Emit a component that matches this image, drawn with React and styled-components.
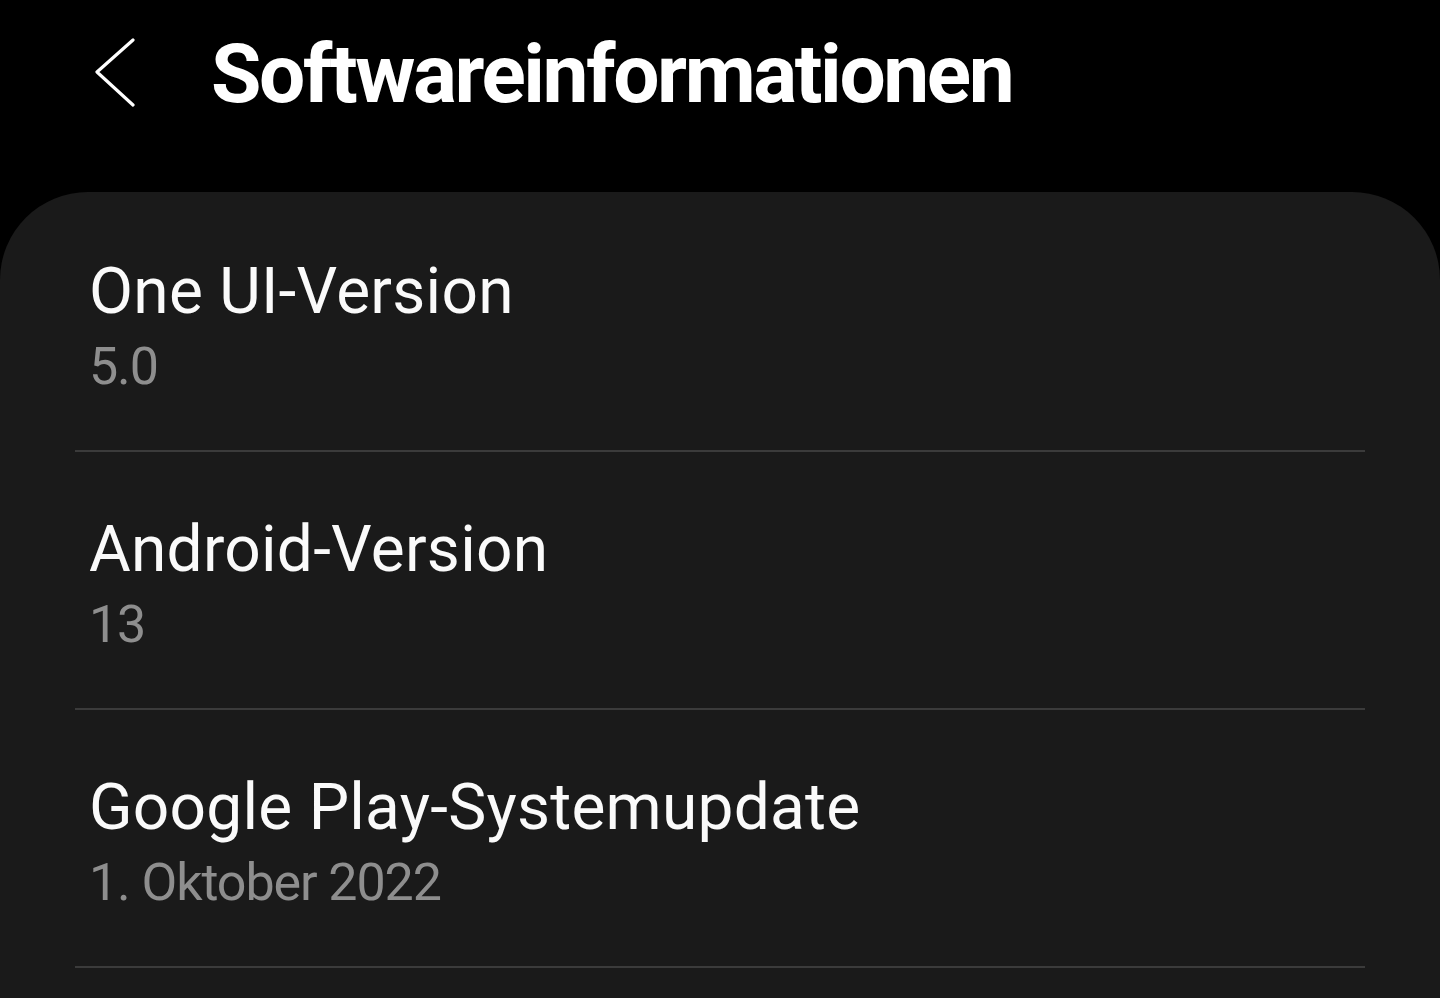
import React from "react";
import styled, { createGlobalStyle } from "styled-components";

const Global = createGlobalStyle`
  html, body { margin: 0; padding: 0; background: #000; }
  body { font-family: Roboto, "Noto Sans", sans-serif; -webkit-font-smoothing: antialiased; }
`;

const Screen = styled.div`
  width: 1440px;
  height: 998px;
  background: #000;
  overflow: hidden;
  display: flex;
  flex-direction: column;
`;

const Header = styled.header`
  height: 192px;
  display: flex;
  align-items: flex-start;
  padding: 0 0 0 92px;
  box-sizing: border-box;
`;

const BackButton = styled.button`
  background: none;
  border: none;
  padding: 0;
  margin-top: 38px;
  width: 46px;
  height: 70px;
  display: flex;
  cursor: pointer;
`;

const Title = styled.h1`
  margin: 0 0 0 73px;
  padding-top: 26px;
  font-family: Roboto, sans-serif;
  font-weight: 700;
  font-size: 82px;
  line-height: 96px;
  color: #fff;
  letter-spacing: -2.4px;
`;

const Card = styled.section`
  flex: 1;
  background: #1a1a1a;
  border-radius: 88px 88px 0 0;
  padding-top: 2px;
`;

const Row = styled.div`
  margin: 0 75px;
  padding: 60px 0 53px 14px;
  border-bottom: 2px solid #3b3b3b;
  display: flex;
  flex-direction: column;
  gap: 7px;
`;

const RowTitle = styled.div`
  font-size: 64px;
  line-height: 76px;
  color: #fafafa;
  letter-spacing: 0.25px;
`;

const RowValue = styled.div`
  font-size: 52px;
  line-height: 60px;
  color: #8e8e8e;
  letter-spacing: -1.1px;
`;

const items = [
  { title: "One UI-Version", value: "5.0" },
  { title: "Android-Version", value: "13" },
  { title: "Google Play-Systemupdate", value: "1. Oktober 2022" },
];

export default function App() {
  return (
    <Screen>
      <Global />
      <Header>
        <BackButton aria-label="Zurück">
          <svg width="46" height="70" viewBox="0 0 46 70" fill="none">
            <path d="M41 2 L5 34 L41 67" stroke="#fff" strokeWidth="3.2" strokeLinecap="round" strokeLinejoin="round" />
          </svg>
        </BackButton>
        <Title>Softwareinformationen</Title>
      </Header>
      <Card>
        {items.map((it) => (
          <Row key={it.title}>
            <RowTitle>{it.title}</RowTitle>
            <RowValue>{it.value}</RowValue>
          </Row>
        ))}
      </Card>
    </Screen>
  );
}
